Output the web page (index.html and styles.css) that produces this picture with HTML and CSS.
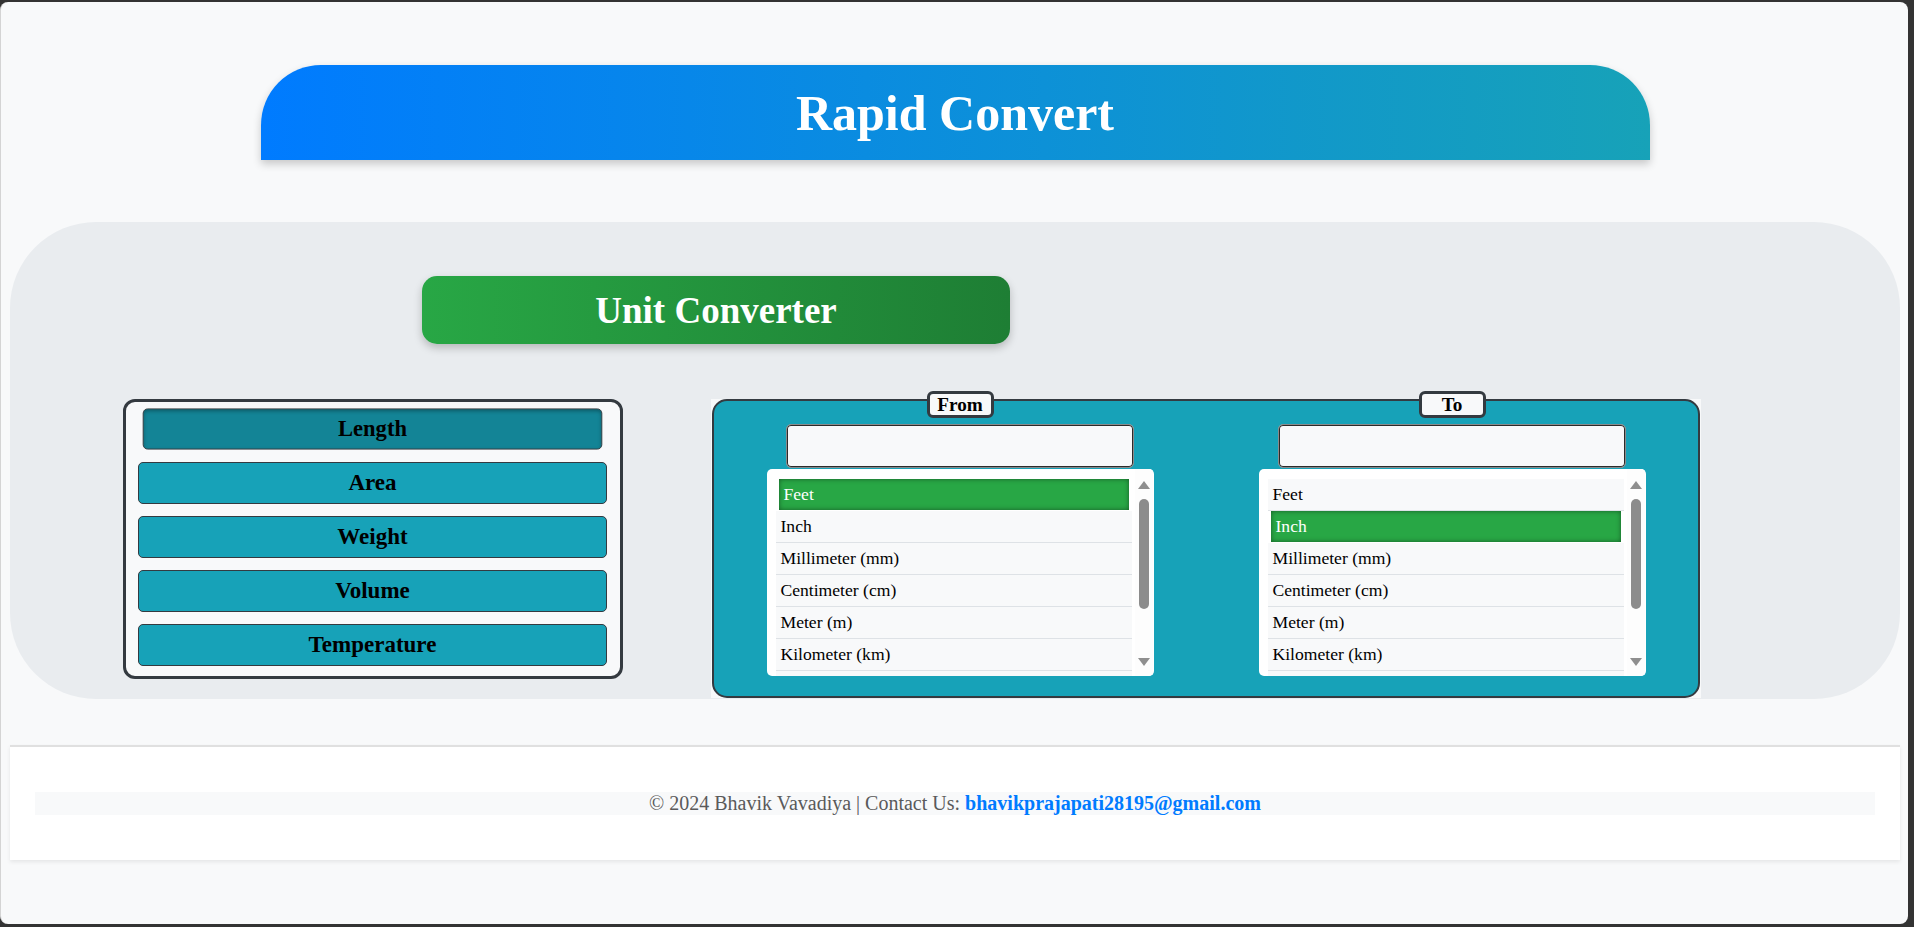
FILE: index.html
```html
<!DOCTYPE html>
<html lang="en">
<head>
<meta charset="utf-8">
<title>Rapid Convert</title>
<link rel="stylesheet" href="styles.css">
</head>
<body>
<div class="window">
  <header class="app-header">
    <h1 class="app-title">Rapid Convert</h1>
  </header>

  <section class="converter-section">
    <div class="section-title">Unit Converter</div>
    <div class="converter-body">
      <div class="category-box">
        <div class="cat-btn active">Length</div>
        <div class="cat-btn">Area</div>
        <div class="cat-btn">Weight</div>
        <div class="cat-btn">Volume</div>
        <div class="cat-btn">Temperature</div>
      </div>

      <div class="panel-wrap">
        <div class="panel">
          <div class="panel-col">
            <div class="col-label">From</div>
            <input class="value-input" type="text">
            <div class="listbox">
              <div class="options">
                <div class="option selected">Feet</div>
                <div class="option">Inch</div>
                <div class="option">Millimeter (mm)</div>
                <div class="option">Centimeter (cm)</div>
                <div class="option">Meter (m)</div>
                <div class="option">Kilometer (km)</div>
                <div class="option option-peek"></div>
              </div>
              <div class="scrollbar">
                <span class="arrow-up"></span>
                <span class="thumb"></span>
                <span class="track-fill"></span>
                <span class="arrow-down"></span>
              </div>
            </div>
          </div>
          <div class="panel-col">
            <div class="col-label">To</div>
            <input class="value-input" type="text">
            <div class="listbox">
              <div class="options">
                <div class="option">Feet</div>
                <div class="option selected">Inch</div>
                <div class="option">Millimeter (mm)</div>
                <div class="option">Centimeter (cm)</div>
                <div class="option">Meter (m)</div>
                <div class="option">Kilometer (km)</div>
                <div class="option option-peek"></div>
              </div>
              <div class="scrollbar">
                <span class="arrow-up"></span>
                <span class="thumb"></span>
                <span class="track-fill"></span>
                <span class="arrow-down"></span>
              </div>
            </div>
          </div>
        </div>
      </div>
    </div>
  </section>

  <footer class="app-footer">
    <p class="footer-text">© 2024 Bhavik Vavadiya | Contact Us: <a class="footer-link" href="#">bhavikprajapati28195@gmail.com</a></p>
  </footer>
</div>
</body>
</html>
```

FILE: styles.css
```css
html {
  background: #333333;
  height: 100%;
}

body {
  margin: 0;
  height: 100%;
  font-family: "Liberation Serif", "Times New Roman", serif;
}

.window {
  box-sizing: border-box;
  height: calc(100vh - 5px);
  margin: 2px 6px 3px 0;
  padding: 0 8px 0 9px;
  background: #f8f9fa;
  border-left: 1px solid #d4d4d4;
  border-radius: 8px;
  overflow: hidden;
}

/* Header */
.app-header {
  width: 1389px;
  height: 95px;
  margin: 63px auto 0;
  display: flex;
  align-items: center;
  justify-content: center;
  background: linear-gradient(to right, #007bff, #17a2b8);
  border-radius: 60px 60px 0 0;
  box-shadow: 0 4px 8px rgba(0, 0, 0, 0.2);
}

.app-title {
  margin: 0;
  color: #ffffff;
  font-size: 50px;
  font-weight: bold;
}

/* Main section */
.converter-section {
  margin-top: 62px;
  padding: 54px 0 1px;
  background: #e9ecef;
  border-radius: 86px;
}

.section-title {
  box-sizing: border-box;
  width: 588px;
  height: 68px;
  margin-left: 412px;
  display: flex;
  align-items: center;
  justify-content: center;
  color: #ffffff;
  font-size: 37px;
  font-weight: bold;
  background: linear-gradient(to right, #28a745, #1e7e34);
  border-radius: 15px;
  box-shadow: 0 4px 8px rgba(0, 0, 0, 0.22);
}

.converter-body {
  margin-top: 55px;
  display: flex;
  align-items: flex-start;
}

/* Category list */
.category-box {
  box-sizing: border-box;
  width: 500px;
  margin-left: 113px;
  padding: 6px 13px 10px 12px;
  display: flex;
  flex-direction: column;
  gap: 12px;
  background: #f8f9fa;
  border: 3px solid #343a40;
  border-radius: 12px;
}

.cat-btn {
  box-sizing: border-box;
  height: 42px;
  display: flex;
  align-items: center;
  justify-content: center;
  background: #17a2b8;
  border: 1px solid #343a40;
  border-radius: 5px;
  color: #000000;
  font-size: 23px;
  font-weight: bold;
}

.cat-btn.active {
  background: #138496;
  transform: scale(0.98);
  box-shadow: inset 0 2px 4px rgba(0, 0, 0, 0.3);
}

/* Converter panel */
.panel-wrap {
  box-sizing: border-box;
  width: 990px;
  height: 299px;
  margin-left: 88px;
  padding-left: 1px;
  background: #f8f9fa;
}

.panel {
  box-sizing: border-box;
  width: 988px;
  height: 299px;
  display: grid;
  grid-template-columns: 1fr 1fr;
  background: #17a2b8;
  border: 2px solid #343a40;
  border-radius: 15px;
}

.panel-col {
  display: flex;
  flex-direction: column;
  align-items: center;
}

.col-label {
  box-sizing: border-box;
  width: 67px;
  height: 27px;
  margin-top: -10px;
  display: flex;
  align-items: center;
  justify-content: center;
  background: #f8f9fa;
  border: 3px solid #343a40;
  border-radius: 6px;
  color: #000000;
  font-size: 19.2px;
  font-weight: bold;
}

.value-input {
  box-sizing: border-box;
  width: 348px;
  height: 44px;
  margin: 6px 0 0;
  padding: 0 8px;
  background: #f8f9fa;
  border: 1px solid #8a8a8a;
  border-radius: 5px;
  box-shadow: inset 0 0 0 1px #2b2b2b;
  font-family: "Liberation Serif", "Times New Roman", serif;
  font-size: 18px;
  outline: none;
}

.listbox {
  box-sizing: border-box;
  width: 387px;
  height: 207px;
  margin-top: 1px;
  padding: 0 1px 0 9px;
  display: flex;
  background: #ffffff;
  border-radius: 5px;
  overflow: hidden;
}

.options {
  flex: 1;
  padding-top: 10px;
  overflow: hidden;
}

.option {
  box-sizing: border-box;
  height: 32px;
  padding-left: 5px;
  display: flex;
  align-items: center;
  background: #f8f9fa;
  border-bottom: 1px solid #dee2e6;
  color: #000000;
  font-size: 17.6px;
}

.option.selected {
  height: 31px;
  margin: 0 3px 1px;
  border-bottom: none;
  background: #28a745;
  color: #ffffff;
  box-shadow: inset 0 0 5px rgba(0, 0, 0, 0.45);
}

.option-peek {
  height: 14px;
  border-bottom: none;
}

/* Scrollbar drawn in flow */
.scrollbar {
  box-sizing: border-box;
  width: 18px;
  margin-left: 3px;
  padding: 12px 0 10px;
  display: flex;
  flex-direction: column;
  align-items: center;
  background: #fdfdfd;
}

.arrow-up {
  width: 0;
  height: 0;
  border-left: 6px solid transparent;
  border-right: 6px solid transparent;
  border-bottom: 8px solid #8f8f8f;
}

.arrow-down {
  width: 0;
  height: 0;
  border-left: 6px solid transparent;
  border-right: 6px solid transparent;
  border-top: 8px solid #8f8f8f;
}

.thumb {
  width: 10px;
  height: 110px;
  margin-top: 10px;
  background: #8c8c8c;
  border-radius: 5px;
}

.track-fill {
  flex: 1;
}

/* Footer */
.app-footer {
  margin-top: 46px;
  padding: 45px 25px;
  background: #ffffff;
  border-top: 2px solid #e0e0e0;
  box-shadow: 0 2px 4px rgba(0, 0, 0, 0.08);
}

.footer-text {
  margin: 0;
  background: #f8f9fa;
  color: #5a5a5a;
  font-size: 20px;
  line-height: 23px;
  text-align: center;
}

.footer-link {
  color: #007bff;
  font-weight: bold;
  text-decoration: none;
}
```
